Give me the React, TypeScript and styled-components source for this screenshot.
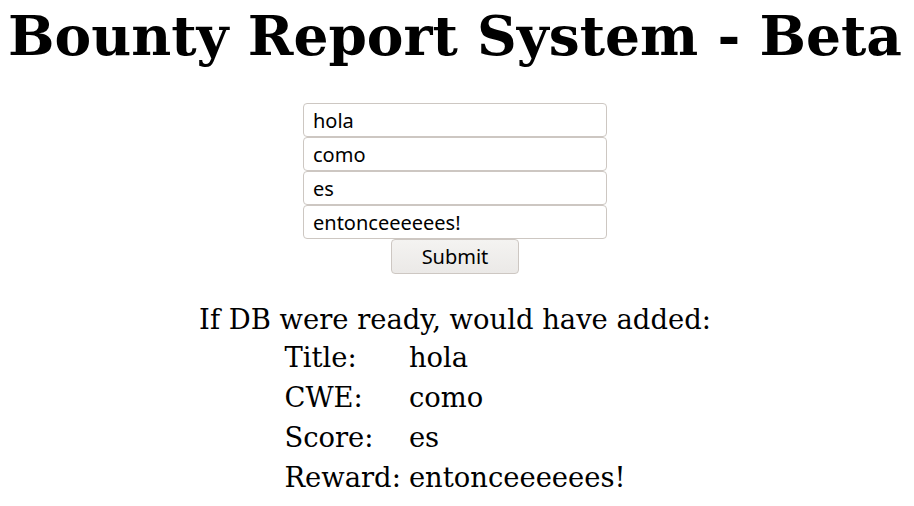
import React from "react";
import styled, { createGlobalStyle } from "styled-components";

const Global = createGlobalStyle`
  html, body { margin: 0; padding: 0; background: #fff; }
  body { font-family: "DejaVu Serif", serif; color: #000; }
`;

const Page = styled.div`
  display: flex;
  flex-direction: column;
  align-items: center;
  padding-right: 4px;
`;

const Heading = styled.h1`
  margin: 0;
  font-family: "DejaVu Serif", serif;
  font-weight: bold;
  font-size: 55px;
  line-height: 72px;
  text-align: center;
  white-space: nowrap;
`;

const Form = styled.form`
  margin-top: 31px;
  display: flex;
  flex-direction: column;
  align-items: center;
`;

const Field = styled.input`
  box-sizing: border-box;
  width: 304px;
  height: 34px;
  margin: 0;
  padding: 0 9px;
  border: 1px solid #cdc7c2;
  border-radius: 4px;
  background: #fff;
  font-family: "Noto Sans", "DejaVu Sans", sans-serif;
  font-size: 20px;
  color: #000;
  outline: none;
`;

const Button = styled.button`
  box-sizing: border-box;
  width: 128px;
  height: 35px;
  margin: 0;
  padding: 0;
  border: 1px solid #cdc7c2;
  border-radius: 4px;
  background: linear-gradient(#f4f3f1, #ebe9e7);
  font-family: "Noto Sans", "DejaVu Sans", sans-serif;
  font-size: 20px;
  color: #000;
`;

const Result = styled.div`
  margin-top: 28px;
  display: flex;
  flex-direction: column;
  align-items: center;
  font-family: "DejaVu Serif", serif;
  font-size: 27.4px;
`;

const Intro = styled.div`
  line-height: 36px;
`;

const Table = styled.div`
  display: grid;
  grid-template-columns: auto auto;
  column-gap: 8px;
  row-gap: 4px;
  margin-top: 2px;
`;

const Cell = styled.div`
  line-height: 36px;
`;

const rows: [string, string][] = [
  ["Title:", "hola"],
  ["CWE:", "como"],
  ["Score:", "es"],
  ["Reward:", "entonceeeeees!"],
];

export default function App() {
  return (
    <Page>
      <Global />
      <Heading>Bounty Report System - Beta</Heading>
      <Form onSubmit={(e) => e.preventDefault()}>
        <Field defaultValue="hola" />
        <Field defaultValue="como" />
        <Field defaultValue="es" />
        <Field defaultValue="entonceeeeees!" />
        <Button type="submit">Submit</Button>
      </Form>
      <Result>
        <Intro>If DB were ready, would have added:</Intro>
        <Table>
          {rows.map(([k, v]) => (
            <React.Fragment key={k}>
              <Cell>{k}</Cell>
              <Cell>{v}</Cell>
            </React.Fragment>
          ))}
        </Table>
      </Result>
    </Page>
  );
}
